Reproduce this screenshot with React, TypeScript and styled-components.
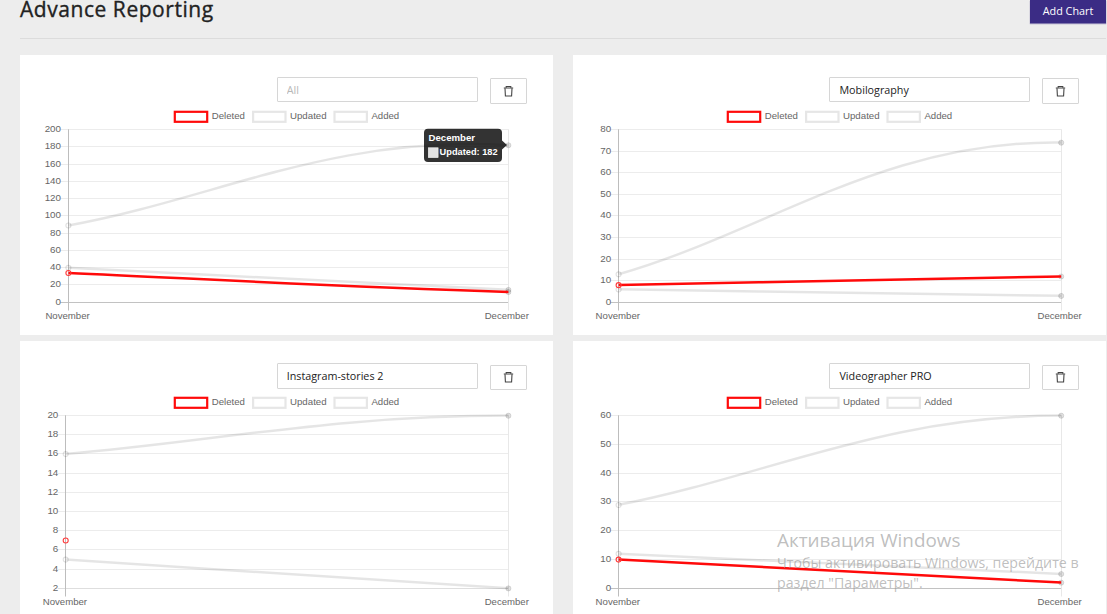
import React from "react";
import styled, { createGlobalStyle } from "styled-components";

const GlobalStyle = createGlobalStyle`
  html, body { margin: 0; background: #ededed; overflow: hidden; }
  * { box-sizing: border-box; }
`;

const Page = styled.main`
  height: 100vh;
  overflow: hidden;
  padding-left: 20px;
  background: #ededed;
  font-family: "Open Sans", "Noto Sans", sans-serif;
  color: #222;
`;

const Header = styled.header`
  display: flex;
  justify-content: space-between;
  align-items: flex-start;
  width: 1086px;
  height: 39px;
  border-bottom: 1px solid #dcdcdc;
`;

const Title = styled.h1`
  margin: 0;
  font-size: 21px;
  line-height: 19px;
  font-weight: 500;
  letter-spacing: 0.55px;
  -webkit-text-stroke: 0.35px #222;
  white-space: nowrap;
`;

const AddButton = styled.button`
  width: 76px;
  height: 23px;
  padding: 0 0 1px;
  border: 0;
  background: #3b2c85;
  box-shadow: 0 1px 1px rgba(59, 44, 133, 0.6);
  color: #fff;
  font: 500 10.8px/22px "Open Sans", "Noto Sans", sans-serif;
  white-space: nowrap;
`;

const Grid = styled.section`
  display: grid;
  grid-template-columns: 1fr 1fr;
  gap: 6px 20px;
  width: 1085.5px;
  margin-top: 15.7px;
`;

const Card = styled.article`
  height: 280.4px;
  padding-top: 22px;
  background: #fff;
  overflow: hidden;
`;

const CardBar = styled.div`
  display: flex;
  justify-content: flex-end;
  align-items: flex-start;
  gap: 12px;
  height: 28.3px;
  padding-right: 26.05px;
`;

const NameField = styled.input`
  width: 201px;
  height: 25.7px;
  padding: 1px 9px 0;
  border: 1px solid #d6d6d6;
  border-radius: 1px;
  background: #fff;
  color: #222;
  font: 10.75px "Open Sans", "Noto Sans", sans-serif;
  outline: 0;
  &::placeholder { color: #b8b8b8; }
`;

const DeleteButton = styled.button`
  display: flex;
  align-items: center;
  justify-content: center;
  width: 37px;
  height: 25.2px;
  margin-top: 1.7px;
  padding: 0;
  border: 1px solid #d6d6d6;
  border-radius: 1px;
  background: #fff;
`;

const ChartSvg = styled.svg`
  display: block;
  font-family: "Liberation Sans", Arial, sans-serif;
  font-size: 9.6px;
`;

const Watermark = styled.aside`
  position: absolute;
  left: 777px;
  top: 527px;
  color: rgba(150, 150, 150, 0.62);
  font-family: "Open Sans", "Noto Sans", sans-serif;
  white-space: nowrap;
  pointer-events: none;
`;

const WatermarkTitle = styled.div`
  font-size: 18.9px;
  line-height: 26px;
`;

const WatermarkLine = styled.div`
  font-size: 14.18px;
  line-height: 20px;
`;

type Series = { from: number; to?: number; ease?: [number, number]; red?: boolean };
type ChartData = {
  name: string;
  min: number;
  max: number;
  step: number;
  axisX: number;
  endX: number;
  legendX: number;
  series: Series[];
  tooltip?: boolean;
};

const TOP = 24.3;
const BOTTOM = 197;

const charts: ChartData[] = [
  {
    name: "", min: 0, max: 200, step: 20, axisX: 48.4, endX: 488.4, legendX: 153.7, tooltip: true,
    series: [
      { from: 89, to: 182, ease: [0.33, 1.13] },
      { from: 40, to: 14.5 },
      { from: 34, to: 12, ease: [0.35, 0.7], red: true },
    ],
  },
  {
    name: "Mobilography", min: 0, max: 80, step: 10, axisX: 45.6, endX: 488.2, legendX: 153.7,
    series: [
      { from: 13, to: 74, ease: [0.32, 1.02] },
      { from: 6, to: 3 },
      { from: 8, to: 12, red: true },
    ],
  },
  {
    name: "Instagram-stories 2", min: 2, max: 20, step: 2, axisX: 45.7, endX: 488.4, legendX: 153.7,
    series: [
      { from: 16, to: 20, ease: [0.32, 1] },
      { from: 5, to: 2 },
      { from: 7, red: true },
    ],
  },
  {
    name: "Videographer PRO", min: 0, max: 60, step: 10, axisX: 45.6, endX: 488.2, legendX: 153.7,
    series: [
      { from: 29, to: 60, ease: [0.32, 1] },
      { from: 12, to: 5 },
      { from: 10, to: 2, red: true },
    ],
  },
];

const legend = [
  { label: "Deleted", x: 0, width: 33.2, color: "#ff0a0a" },
  { label: "Updated", x: 78.3, width: 36.6, color: "#e6e6e6" },
  { label: "Added", x: 159.7, width: 27.8, color: "#e6e6e6" },
];

function TrashIcon() {
  return (
    <svg width="11" height="12" viewBox="0 0 11 12" fill="none" stroke="#444">
      <path d="M0.8 3h9.4" strokeWidth="1" />
      <path d="M3.2 2.8V1.5h4.600v1.3" strokeWidth="1.1" />
      <path d="M2 3.200l.4 7.800h6.200l.4-7.800" strokeWidth="1.1" />
    </svg>
  );
}

function Chart({ data }: { data: ChartData }) {
  const { min, max, step, axisX, endX, legendX } = data;
  const y = (v: number) => BOTTOM - ((v - min) / (max - min)) * (BOTTOM - TOP);
  const ticks = Array.from({ length: (max - min) / step + 1 }, (_, i) => min + i * step);
  const axis = Math.floor(axisX) + 0.5;
  const end = Math.floor(endX) + 0.5;

  const curve = (s: Series) => {
    const a = y(s.from);
    const b = y(s.to as number);
    const [p, q] = s.ease || [1 / 3, 0.6];
    const w = endX - axisX;
    return `M${axisX} ${a}C${axisX + w * 0.333} ${a + (b - a) * p} ${axisX + w * 0.6} ${a + (b - a) * q} ${endX} ${b}`;
  };

  return (
    <ChartSvg width="532" height="230" viewBox="0 0 532 230">
      {legend.map((l) => (
        <g key={l.label} transform={`translate(${legendX + l.x} 0)`}>
          <rect x="1.1" y="6.8" width="32.4" height="10" fill="#fff" stroke={l.color} strokeWidth="2.2" />
          <text x="38" y="14.4" fill="#666" textLength={l.width} lengthAdjust="spacingAndGlyphs">{l.label}</text>
        </g>
      ))}
      {ticks.map((t) => {
        const ly = Math.floor(y(t) + 0.25) + 0.5;
        const zero = t === 0;
        return (
          <g key={t}>
            <line x1={axisX - 8} x2={end} y1={ly} y2={ly} stroke={zero ? "#c2c2c2" : t === min ? "#dedede" : "#ececec"} />
            <text x={axisX - 8 + 0.6} y={ly + 2.8} textAnchor="end" fill="#666" fontSize="9.8">{t}</text>
          </g>
        );
      })}
      <line x1={axis} x2={axis} y1={TOP} y2={BOTTOM + 8.5} stroke="#bdbdbd" />
      <line x1={end} x2={end} y1={TOP} y2={BOTTOM + 8.5} stroke="#e8e8e8" />
      <text x={axisX - 23} y="214.2" fill="#666" textLength="44.4" lengthAdjust="spacingAndGlyphs">November</text>
      <text x={endX - 23.7} y="214.2" fill="#666" textLength="44.2" lengthAdjust="spacingAndGlyphs">December</text>
      {data.series.map((s, i) => (
        <g key={i} fill="none">
          {s.to !== undefined && (
            <>
              <circle cx={endX} cy={y(s.to) + 0.4} r="2.6" fill="rgba(0,0,0,.12)" stroke="rgba(0,0,0,.1)" />
              <path d={curve(s)} transform="translate(0 0.3)" stroke={s.red ? "#ff0a0a" : "rgba(0,0,0,.1)"} strokeWidth="2.5" />
            </>
          )}
          <circle cx={axisX} cy={y(s.from) + 0.4} r="2.5" stroke={s.red ? "#ff3b3b" : "rgba(0,0,0,.12)"} strokeWidth="1.1" />
        </g>
      ))}
      {data.tooltip && (
        <g>
          <path d="M408 23.7h70a4 4 0 0 1 4 4V35.4l5 4.6-5 4.6V53a4 4 0 0 1-4 4h-70a4 4 0 0 1-4-4V27.7a4 4 0 0 1 4-4z" fill="rgba(0,0,0,.8)" />
          <rect x="408.3" y="42.8" width="9.8" height="9.8" fill="#e3e3e3" stroke="#f5f5f5" strokeWidth=".6" />
          <g fill="#fff" fontWeight="700">
            <text x="408.5" y="36.2" textLength="46.5" lengthAdjust="spacingAndGlyphs">December</text>
            <text x="419.6" y="50.3" textLength="58" lengthAdjust="spacingAndGlyphs">Updated: 182</text>
          </g>
        </g>
      )}
    </ChartSvg>
  );
}

export default function App() {
  return (
    <Page>
      <GlobalStyle />
      <Header>
        <Title>Advance Reporting</Title>
        <AddButton>Add Chart</AddButton>
      </Header>
      <Grid>
        {charts.map((c) => (
          <Card key={c.max}>
            <CardBar>
              <NameField placeholder="All" defaultValue={c.name} />
              <DeleteButton aria-label="Delete chart"><TrashIcon /></DeleteButton>
            </CardBar>
            <Chart data={c} />
          </Card>
        ))}
      </Grid>
      <Watermark>
        <WatermarkTitle>Активация Windows</WatermarkTitle>
        <WatermarkLine>Чтобы активировать Windows, перейдите в</WatermarkLine>
        <WatermarkLine>раздел "Параметры".</WatermarkLine>
      </Watermark>
    </Page>
  );
}
